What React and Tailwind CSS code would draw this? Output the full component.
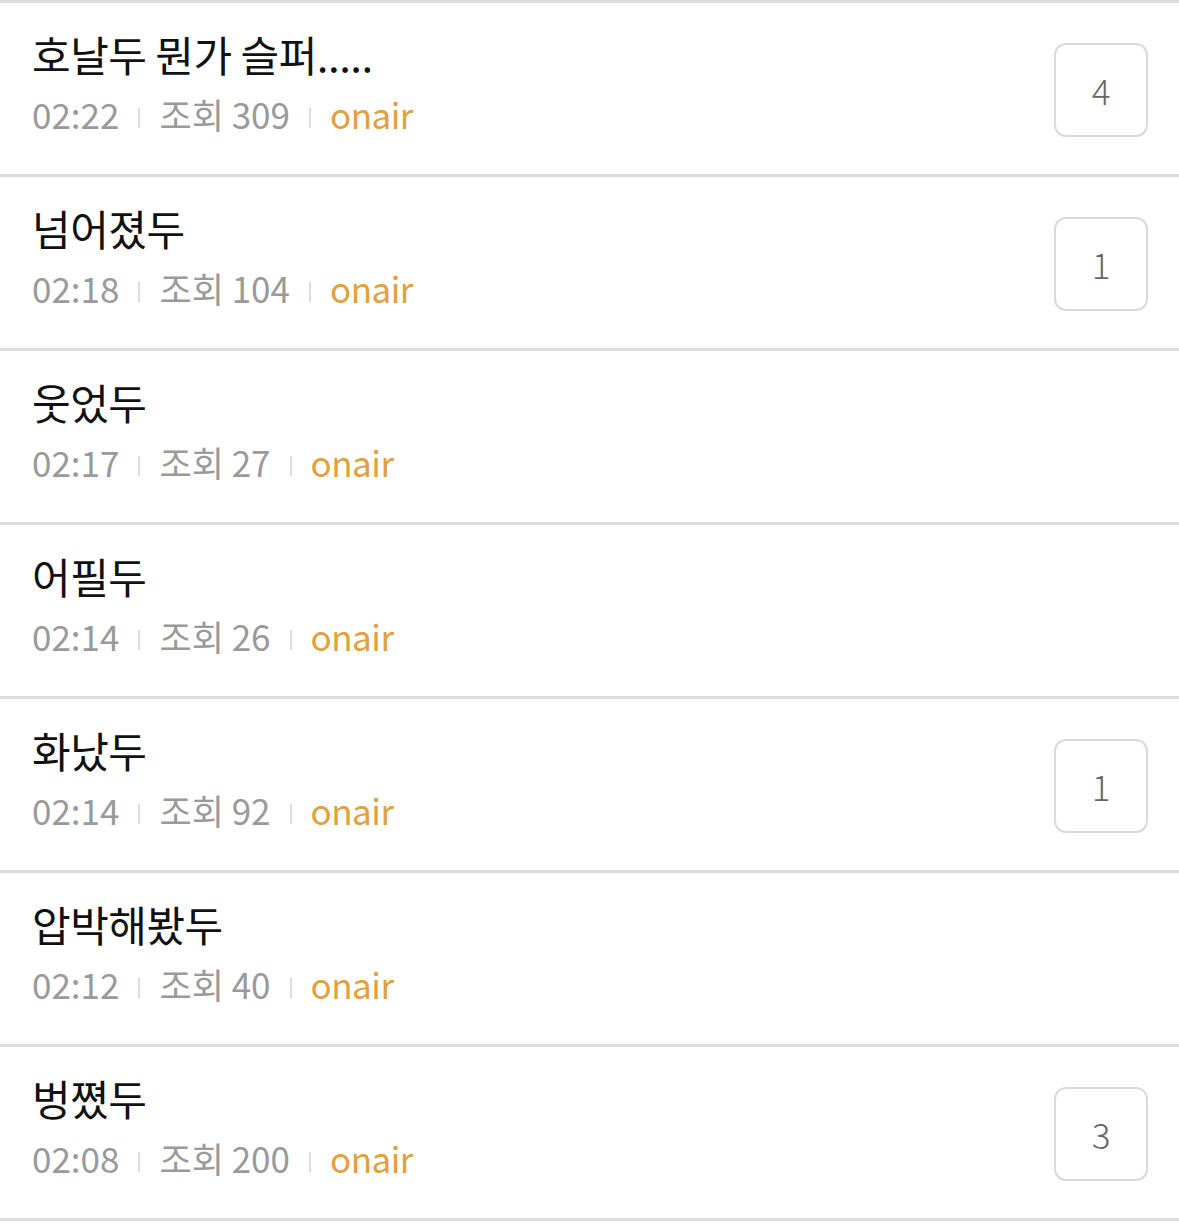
import React from 'react';

const posts = [
  { title: '호날두 뭔가 슬퍼.....', time: '02:22', views: 309, comments: 4 },
  { title: '넘어졌두', time: '02:18', views: 104, comments: 1 },
  { title: '웃었두', time: '02:17', views: 27 },
  { title: '어필두', time: '02:14', views: 26 },
  { title: '화났두', time: '02:14', views: 92, comments: 1 },
  { title: '압박해봤두', time: '02:12', views: 40 },
  { title: '벙쪘두', time: '02:08', views: 200, comments: 3 },
];

const font = { fontFamily: '"Noto Sans CJK KR", "Noto Sans", sans-serif' };

const PostRow = ({ post }) => (
  <div className="flex items-center justify-between h-[174px] pl-8 pr-[31px] border-b-[3px] border-[#dddddd]">
    <div className="flex flex-col mb-[12px]">
      <div className="text-[42px] leading-[50px] text-[#111111] tracking-[-0.5px]">{post.title}</div>
      <div className="flex items-center text-[35px] leading-[44px] mt-[13px] text-[#9a9a9a]">
        <span>{post.time}</span>
        <span className="w-[2px] h-[20px] mt-[8px] bg-[#dddddd] mx-[19px]" />
        <span>조회 {post.views}</span>
        <span className="w-[2px] h-[20px] mt-[8px] bg-[#dddddd] mx-[19px]" />
        <span className="text-[#e3a03f] tracking-[-0.5px]">onair</span>
      </div>
    </div>
    {post.comments != null && (
      <div className="w-[94px] h-[94px] mt-[3px] flex items-center justify-center rounded-[12px] border-2 border-[#dadada] text-[35px] font-light text-[#666666]">
        {post.comments}
      </div>
    )}
  </div>
);

export default function App() {
  return (
    <div className="w-[1179px] min-h-[1223px] bg-white border-t-[3px] border-[#dddddd]" style={font}>
      {posts.map((post, i) => (
        <PostRow key={i} post={post} />
      ))}
    </div>
  );
}
